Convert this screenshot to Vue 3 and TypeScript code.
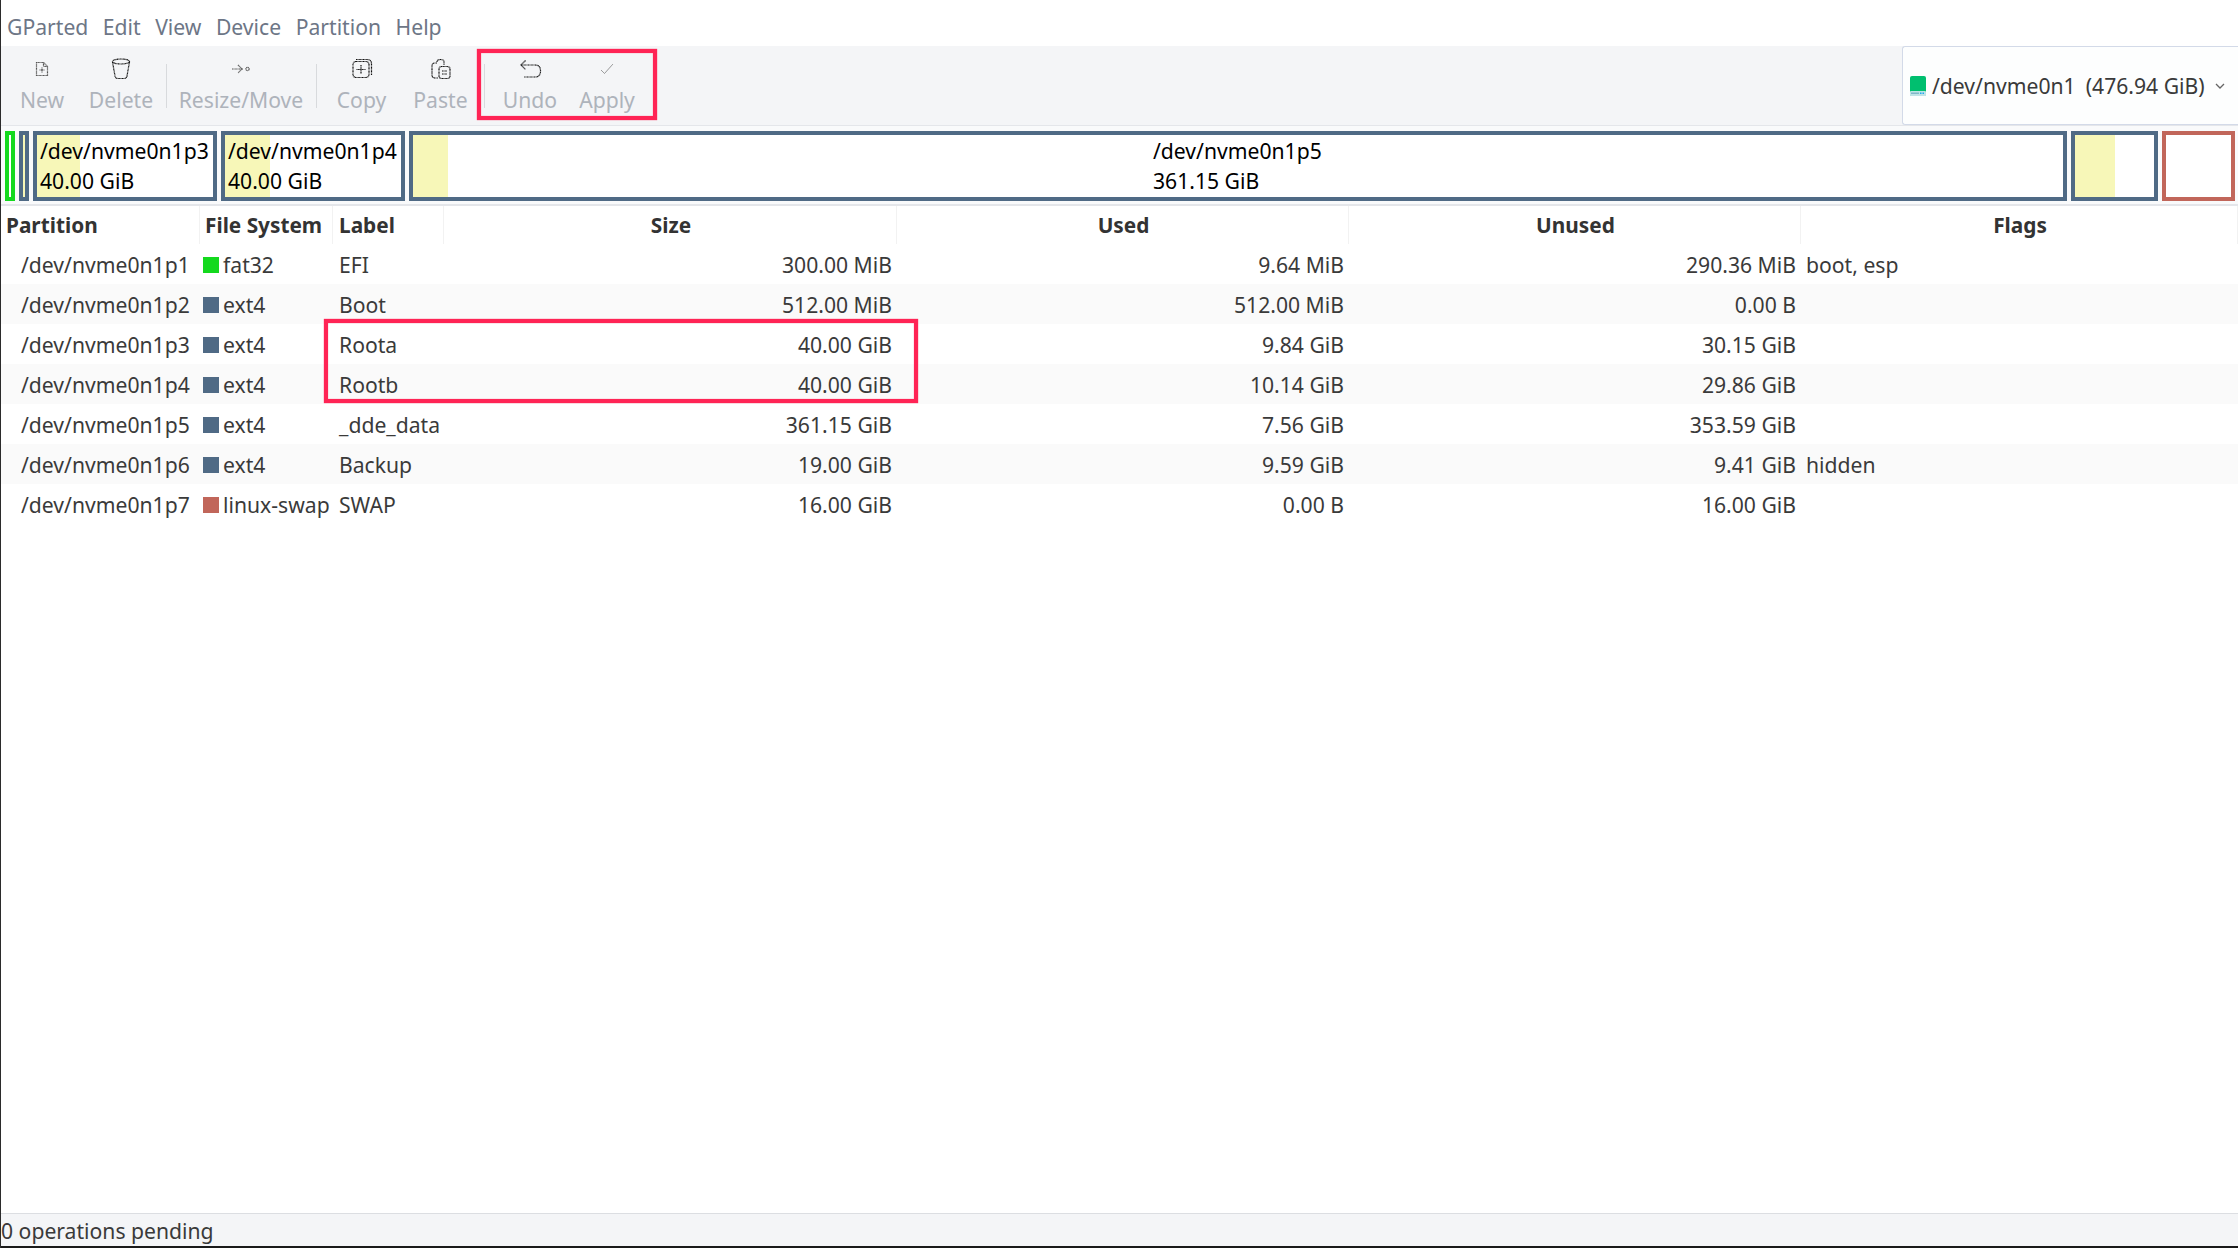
<template>
  <div class="window">
    <div class="menubar">
      <span v-for="m in menus" :key="m" class="menu-item">{{ m }}</span>
    </div>

    <div class="toolbar-row">
      <div class="toolbar">
        <template v-for="t in tools" :key="t.label">
          <div v-if="t.sep" class="sep-wrap"><div class="sep"></div></div>
          <div class="tool" :style="{ width: t.w + 'px' }">
            <svg
              class="tool-icon"
              :class="t.tone"
              width="24"
              height="24"
              viewBox="0 0 24 24"
              fill="none"
              v-html="t.icon"
            />
            <span class="tool-label">{{ t.label }}</span>
          </div>
        </template>
      </div>
      <div class="device">
        <svg class="drive" width="16" height="20" viewBox="0 0 16 20">
          <rect width="16" height="20" rx="2" fill="#00bf6f" />
          <rect y="15" width="16" height="5" rx="1" fill="#bfe3e6" />
          <rect x="1" y="16.5" width="8" height="1.5" fill="#7fb8c8" />
          <rect x="10" y="16.5" width="1.5" height="1.5" fill="#1fa8f0" />
          <rect x="12.5" y="16.5" width="1.5" height="1.5" fill="#1fa8f0" />
        </svg>
        <span class="device-name">/dev/nvme0n1</span>
        <span class="device-size">(476.94 GiB)</span>
        <svg class="chev" width="10" height="6" viewBox="0 0 10 6" fill="none">
          <path d="M1 1l4 4 4-4" stroke="#666" stroke-width="1.3" />
        </svg>
      </div>
    </div>

    <div class="map">
      <div
        v-for="b in blocks"
        :key="b.id"
        class="block"
        :class="{ swap: b.kind === 'swap', efi: b.kind === 'efi' }"
        :style="{ width: b.w + 'px' }"
      >
        <div class="used" :style="{ width: b.used + 'px' }"></div>
        <div v-if="b.name" class="block-text" :style="{ paddingLeft: b.pad + 'px' }">
          <div>{{ b.name }}</div>
          <div>{{ b.size }}</div>
        </div>
      </div>
    </div>

    <div class="table">
      <div class="row head">
        <div class="cell th" v-for="h in heads" :key="h.t" :class="h.c">{{ h.t }}</div>
      </div>
      <div v-for="r in rows" :key="r.p" class="row">
        <div class="cell part">{{ r.p }}</div>
        <div class="cell fs">
          <span class="swatch" :style="{ background: r.color }"></span>{{ r.fs }}
        </div>
        <div class="cell lbl">{{ r.label }}</div>
        <div class="cell num">{{ r.size }}</div>
        <div class="cell num">{{ r.used }}</div>
        <div class="cell num">{{ r.unused }}</div>
        <div class="cell flags">{{ r.flags }}</div>
      </div>
    </div>

    <div class="status">0 operations pending</div>
    <div class="desktop"></div>

    <div class="mark mark-tools"></div>
    <div class="mark mark-rows"></div>
  </div>
</template>

<script setup lang="ts">
const menus = ["GParted", "Edit", "View", "Device", "Partition", "Help"];

const tools = [
  {
    label: "New",
    w: 78,
    sep: false,
    tone: "light",
    icon: '<path d="M6.5 5.5h7l4 4v9h-11z"/><path d="M13.5 5.5v4h4"/><path d="M12 10.5v5M9.5 13h5"/>',
  },
  {
    label: "Delete",
    w: 80,
    sep: false,
    tone: "dark",
    icon: '<ellipse cx="12" cy="4.5" rx="8.5" ry="2.5"/><path d="M3.5 5l2.5 14q.5 2.5 3 2.5h6q2.5 0 3-2.5l2.5-14"/>',
  },
  {
    label: "Resize/Move",
    w: 140,
    sep: true,
    tone: "light",
    icon: '<path d="M3 12h11"/><path d="M9 8l4 4-4 4"/><circle cx="18.5" cy="12" r="1.6"/>',
  },
  {
    label: "Copy",
    w: 81,
    sep: true,
    tone: "dark",
    icon: '<rect x="3" y="4.5" width="16" height="16" rx="3"/><path d="M6 2.5h11q4.5 0 4.5 4.5v11"/><path d="M11 8v9M6.5 12.5h9"/>',
  },
  {
    label: "Paste",
    w: 77,
    sep: false,
    tone: "dark",
    icon: '<path d="M8 6H6q-3 0-3 3v9q0 3 3 3h3"/><path d="M8 5q0-2.5 3.5-2.5T15 5v3"/><rect x="10" y="9.5" width="11" height="12" rx="2.5"/><path d="M13 14h5M13 17h5"/>',
  },
  {
    label: "Undo",
    w: 82,
    sep: true,
    tone: "dark",
    icon: '<path d="M3 8h14q5.5 0 5.5 6t-5.5 6H6"/><path d="M7.5 3.5L3 8l4.5 4.5"/>',
  },
  {
    label: "Apply",
    w: 72,
    sep: false,
    tone: "faint",
    icon: '<path d="M6 13l3.5 3.5L18 7"/>',
  },
];

const blocks = [
  { id: "p1", w: 10, used: 0, kind: "efi", name: "", size: "", pad: 0 },
  { id: "p2", w: 10, used: 2, kind: "ext", name: "", size: "", pad: 0 },
  { id: "p3", w: 184, used: 43, kind: "ext", name: "/dev/nvme0n1p3", size: "40.00 GiB", pad: 3 },
  { id: "p4", w: 184, used: 45, kind: "ext", name: "/dev/nvme0n1p4", size: "40.00 GiB", pad: 3 },
  { id: "p5", w: 1658, used: 35, kind: "ext", name: "/dev/nvme0n1p5", size: "361.15 GiB", pad: 740 },
  { id: "p6", w: 87, used: 40, kind: "ext", name: "", size: "", pad: 0 },
  { id: "p7", w: 73, used: 0, kind: "swap", name: "", size: "", pad: 0 },
];

const heads = [
  { t: "Partition", c: "" },
  { t: "File System", c: "" },
  { t: "Label", c: "th-label" },
  { t: "Size", c: "center" },
  { t: "Used", c: "center" },
  { t: "Unused", c: "center" },
  { t: "Flags", c: "center" },
];

const EXT = "#4f6a85";
const rows = [
  { p: "/dev/nvme0n1p1", color: "#14d91e", fs: "fat32", label: "EFI", size: "300.00 MiB", used: "9.64 MiB", unused: "290.36 MiB", flags: "boot, esp" },
  { p: "/dev/nvme0n1p2", color: EXT, fs: "ext4", label: "Boot", size: "512.00 MiB", used: "512.00 MiB", unused: "0.00 B", flags: "" },
  { p: "/dev/nvme0n1p3", color: EXT, fs: "ext4", label: "Roota", size: "40.00 GiB", used: "9.84 GiB", unused: "30.15 GiB", flags: "" },
  { p: "/dev/nvme0n1p4", color: EXT, fs: "ext4", label: "Rootb", size: "40.00 GiB", used: "10.14 GiB", unused: "29.86 GiB", flags: "" },
  { p: "/dev/nvme0n1p5", color: EXT, fs: "ext4", label: "_dde_data", size: "361.15 GiB", used: "7.56 GiB", unused: "353.59 GiB", flags: "" },
  { p: "/dev/nvme0n1p6", color: EXT, fs: "ext4", label: "Backup", size: "19.00 GiB", used: "9.59 GiB", unused: "9.41 GiB", flags: "hidden" },
  { p: "/dev/nvme0n1p7", color: "#c1665a", fs: "linux-swap", label: "SWAP", size: "16.00 GiB", used: "0.00 B", unused: "16.00 GiB", flags: "" },
];
</script>

<style scoped>
.window {
  position: relative;
  width: 2238px;
  height: 1248px;
  box-sizing: border-box;
  border-left: 1px solid #2b2b2b;
  display: flex;
  flex-direction: column;
  overflow: hidden;
  background: #fff;
  font-family: "Noto Sans", sans-serif;
  font-size: 21.15px;
  color: #3a3a3a;
}
.menubar {
  height: 46px;
  flex: none;
  display: flex;
  align-items: center;
  gap: 14.5px;
  padding: 7px 0 0 6px;
  box-sizing: border-box;
  color: #6d7686;
}
.toolbar-row {
  height: 79px;
  flex: none;
  display: flex;
  justify-content: space-between;
  background: #f4f5f7;
}
.toolbar {
  display: flex;
  padding-left: 2px;
}
.tool {
  display: flex;
  flex-direction: column;
  align-items: center;
  padding-top: 11px;
  box-sizing: border-box;
}
.tool-icon {
  stroke-width: 1.2;
  stroke-dasharray: 1 0.4;
}
.tool-icon.dark {
  stroke: #111;
}
.tool-icon.light {
  stroke: #555;
}
.tool-icon.faint {
  stroke: #777;
  stroke-width: 1;
}
.tool-label {
  color: #aeb3bb;
  line-height: 30px;
  margin-top: 4px;
}
.sep-wrap {
  width: 10px;
  display: flex;
  justify-content: center;
  padding-top: 18px;
}
.sep {
  width: 1px;
  height: 44px;
  background: #d8dadd;
}
.device {
  width: 336px;
  box-sizing: border-box;
  display: flex;
  align-items: center;
  padding-left: 7px;
  background: #fdfefe;
  border: 1px solid #d3dae8;
  border-right: none;
  border-top-left-radius: 3px;
  border-bottom-left-radius: 3px;
}
.device-name {
  margin-left: 6px;
  white-space: nowrap;
}
.device-size {
  margin-left: 10px;
  white-space: nowrap;
}
.chev {
  margin-left: 10px;
}
.map {
  height: 81px;
  flex: none;
  display: flex;
  align-items: flex-start;
  gap: 4px;
  padding: 5px 0 0 4px;
  box-sizing: border-box;
  border-top: 1px solid #e4e6ea;
  border-bottom: 2px solid #e4e6ea;
  background: #f9fafb;
}
.block {
  position: relative;
  flex: none;
  height: 70px;
  box-sizing: border-box;
  border: 4px solid #4f6a85;
  background: #fff;
}
.block.efi {
  border-color: #14d91e;
}
.block.swap {
  border-color: #c1665a;
}
.used {
  position: absolute;
  top: 0;
  bottom: 0;
  left: 0;
  background: #f7f7b8;
}
.block-text {
  position: relative;
  color: #000;
  line-height: 30px;
  padding-top: 1px;
  white-space: nowrap;
}
.table {
  flex: 1;
  min-height: 0;
}
.row {
  display: grid;
  grid-template-columns: 199px 133px 111px 453px 452px 452px 1fr;
  height: 40px;
  align-items: center;
}
.row:nth-child(odd) {
  background: #fafafa;
}
.row.head {
  height: 38px;
  background: #fff;
}
.cell {
  box-sizing: border-box;
  padding: 2px 6px 0;
  white-space: nowrap;
  line-height: 38px;
}
.th {
  font-weight: 700;
  font-size: 20.8px;
  color: #333;
  padding: 0 0 0 5px;
  border-right: 1px solid #f2f2f2;
}
.th.center {
  text-align: center;
  padding: 0 4px 0 6px;
}
.th.th-label {
  padding-left: 6px;
}
.part {
  padding-left: 20px;
}
.fs {
  display: flex;
  align-items: center;
  padding-left: 3px;
}
.swatch {
  width: 16px;
  height: 16px;
  margin-right: 4px;
  flex: none;
}
.num {
  text-align: right;
  padding-right: 5px;
}
.flags {
  padding-left: 5px;
}
.status {
  height: 32px;
  flex: none;
  line-height: 34px;
  background: #f4f5f7;
  border-top: 1px solid #dcdee2;
  white-space: nowrap;
}
.desktop {
  height: 2px;
  flex: none;
  background: #1a1a1a;
}
.mark {
  position: absolute;
  box-sizing: border-box;
  border: 4px solid #ff2455;
  box-shadow: 0 0 1px #ff2455, inset 0 0 1px #ff2455;
}
.mark-tools {
  left: 476px;
  top: 49px;
  width: 180px;
  height: 71px;
}
.mark-rows {
  left: 323px;
  top: 319px;
  width: 594px;
  height: 84px;
}
</style>
